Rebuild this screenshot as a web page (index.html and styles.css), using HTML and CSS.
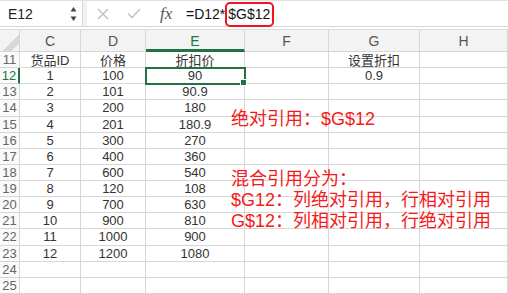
FILE: index.html
```html
<!DOCTYPE html>
<html lang="zh">
<head>
    <meta charset="UTF-8">
    <title>绝对引用与混合引用</title>
    <link rel="stylesheet" href="styles.css">
</head>
<body>
    <div class="topbar">
        <div class="namebox">
            <span>E12</span>
            <svg class="spin" width="7" height="16" viewBox="0 0 7 16">
                <path d="M3.5 1 L6.5 5.5 L0.5 5.5 Z" fill="#444"/>
                <path d="M3.5 15 L6.5 10.5 L0.5 10.5 Z" fill="#444"/>
            </svg>
        </div>
        <div class="tools">
            <svg width="12" height="12" viewBox="0 0 12 12" class="cancel">
                <path d="M1 1 L11 11 M11 1 L1 11" stroke="#c6c6c6" stroke-width="1.6"/>
            </svg>
            <svg width="14" height="11" viewBox="0 0 14 11" class="ok">
                <path d="M1 5.5 L5 9.5 L13 1" stroke="#c6c6c6" stroke-width="1.6" fill="none"/>
            </svg>
            <span class="fx">fx</span>
        </div>
        <div class="formula">=D12*<span class="mark">$G$12</span></div>
    </div>

    <div class="sheet" id="sheet"></div>

    <div class="note note-abs">绝对引用：$G$12</div>
    <div class="note note-mix">
        混合引用分为：<br>
        $G12：列绝对引用，行相对引用<br>
        G$12：列相对引用，行绝对引用
    </div>

    <script>
        const cols = ["C", "D", "E", "F", "G", "H"];
        const rows = [
            ["货品ID", "价格", "折扣价", "", "设置折扣", ""],
            ["1", "100", "90", "", "0.9", ""],
            ["2", "101", "90.9", "", "", ""],
            ["3", "200", "180", "", "", ""],
            ["4", "201", "180.9", "", "", ""],
            ["5", "300", "270", "", "", ""],
            ["6", "400", "360", "", "", ""],
            ["7", "600", "540", "", "", ""],
            ["8", "120", "108", "", "", ""],
            ["9", "700", "630", "", "", ""],
            ["10", "900", "810", "", "", ""],
            ["11", "1000", "900", "", "", ""],
            ["12", "1200", "1080", "", "", ""],
            ["", "", "", "", "", ""],
            ["", "", "", "", "", ""]
        ];
        const sheet = document.getElementById("sheet");
        let html = '<div class="corner"></div>';
        cols.forEach(c => {
            html += `<div class="colhead${c === "E" ? " active" : ""}">${c}</div>`;
        });
        rows.forEach((r, i) => {
            const n = 11 + i;
            html += `<div class="rowhead${n === 12 ? " active" : ""}">${n}</div>`;
            r.forEach((v, j) => {
                const sel = (n === 12 && cols[j] === "E") ? " sel" : "";
                html += `<div class="cell${sel}">${v}</div>`;
            });
        });
        sheet.innerHTML = html;
    </script>
</body>
</html>
```

FILE: styles.css
```css
body {
    margin: 0;
    width: 508px;
    height: 293px;
    overflow: hidden;
    font-family: "Liberation Sans", "Noto Sans CJK SC", sans-serif;
    background: #fff;
    position: relative;
}
.topbar {
    height: 27px;
    display: flex;
    align-items: center;
    border-top: 1px solid #e2e2e2;
    border-bottom: 1px solid #d6d6d6;
    box-sizing: border-box;
}
.namebox {
    width: 83px;
    height: 100%;
    display: flex;
    align-items: center;
    justify-content: space-between;
    padding: 0 5px 0 8px;
    box-sizing: border-box;
    border-right: 1px solid #dadada;
    font-size: 14px;
    color: #222;
}
.tools {
    width: 100px;
    height: 100%;
    display: flex;
    align-items: center;
    border-left: 4px solid #f2f2f2;
    box-sizing: border-box;
}
.cancel {
    margin-left: 10px;
}
.ok {
    margin-left: 18px;
}
.fx {
    margin-left: 19px;
    font-family: "Liberation Serif", serif;
    font-style: italic;
    font-size: 17px;
    color: #555;
}
.formula {
    display: flex;
    align-items: center;
    height: 100%;
    padding-left: 3px;
    font-size: 14px;
    color: #111;
}
.mark {
    display: inline-flex;
    align-items: center;
    height: 25px;
    margin-top: 1px;
    padding: 0 2px 0 1px;
    border: 2.5px solid #f0141e;
    border-radius: 5px;
    box-sizing: border-box;
}
.sheet {
    display: grid;
    grid-template-columns: 20px 61px 65px 99px 84px 91px 88px;
    grid-template-rows: 22px repeat(15, 16.13px);
    margin-top: 2px;
    border-top: 1px solid #dcdcdc;
    font-size: 13px;
    color: #333;
}
.sheet > div {
    box-sizing: border-box;
    border-right: 1px solid #d6d6d6;
    border-bottom: 1px solid #d6d6d6;
    display: flex;
    align-items: center;
    justify-content: center;
    white-space: nowrap;
}
.corner {
    background: #f3f3f3 linear-gradient(135deg, transparent 60%, #d8d8d8 60%, #d8d8d8 82%, transparent 82%);
    background-size: 100% 100%;
}
.colhead {
    background: #f3f3f3;
    color: #555;
    font-size: 14px;
}
.colhead.active {
    color: #217346;
    border-bottom: 3px solid #217346 !important;
    padding-top: 2px;
}
.rowhead {
    background: #fafafa;
    color: #666;
    font-size: 13px;
}
.rowhead.active {
    color: #217346;
    border-right: 2px solid #217346 !important;
}
.cell.sel {
    position: relative;
    outline: 2px solid #217346;
    outline-offset: -1px;
    z-index: 1;
}
.cell.sel::after {
    content: "";
    position: absolute;
    right: -3px;
    bottom: -3px;
    width: 5px;
    height: 5px;
    background: #217346;
    border: 1px solid #fff;
}
.note {
    position: absolute;
    left: 231px;
    color: #f51a1a;
    font-size: 18px;
    line-height: 21px;
}
.note-abs {
    top: 109px;
}
.note-mix {
    top: 169px;
}
```
